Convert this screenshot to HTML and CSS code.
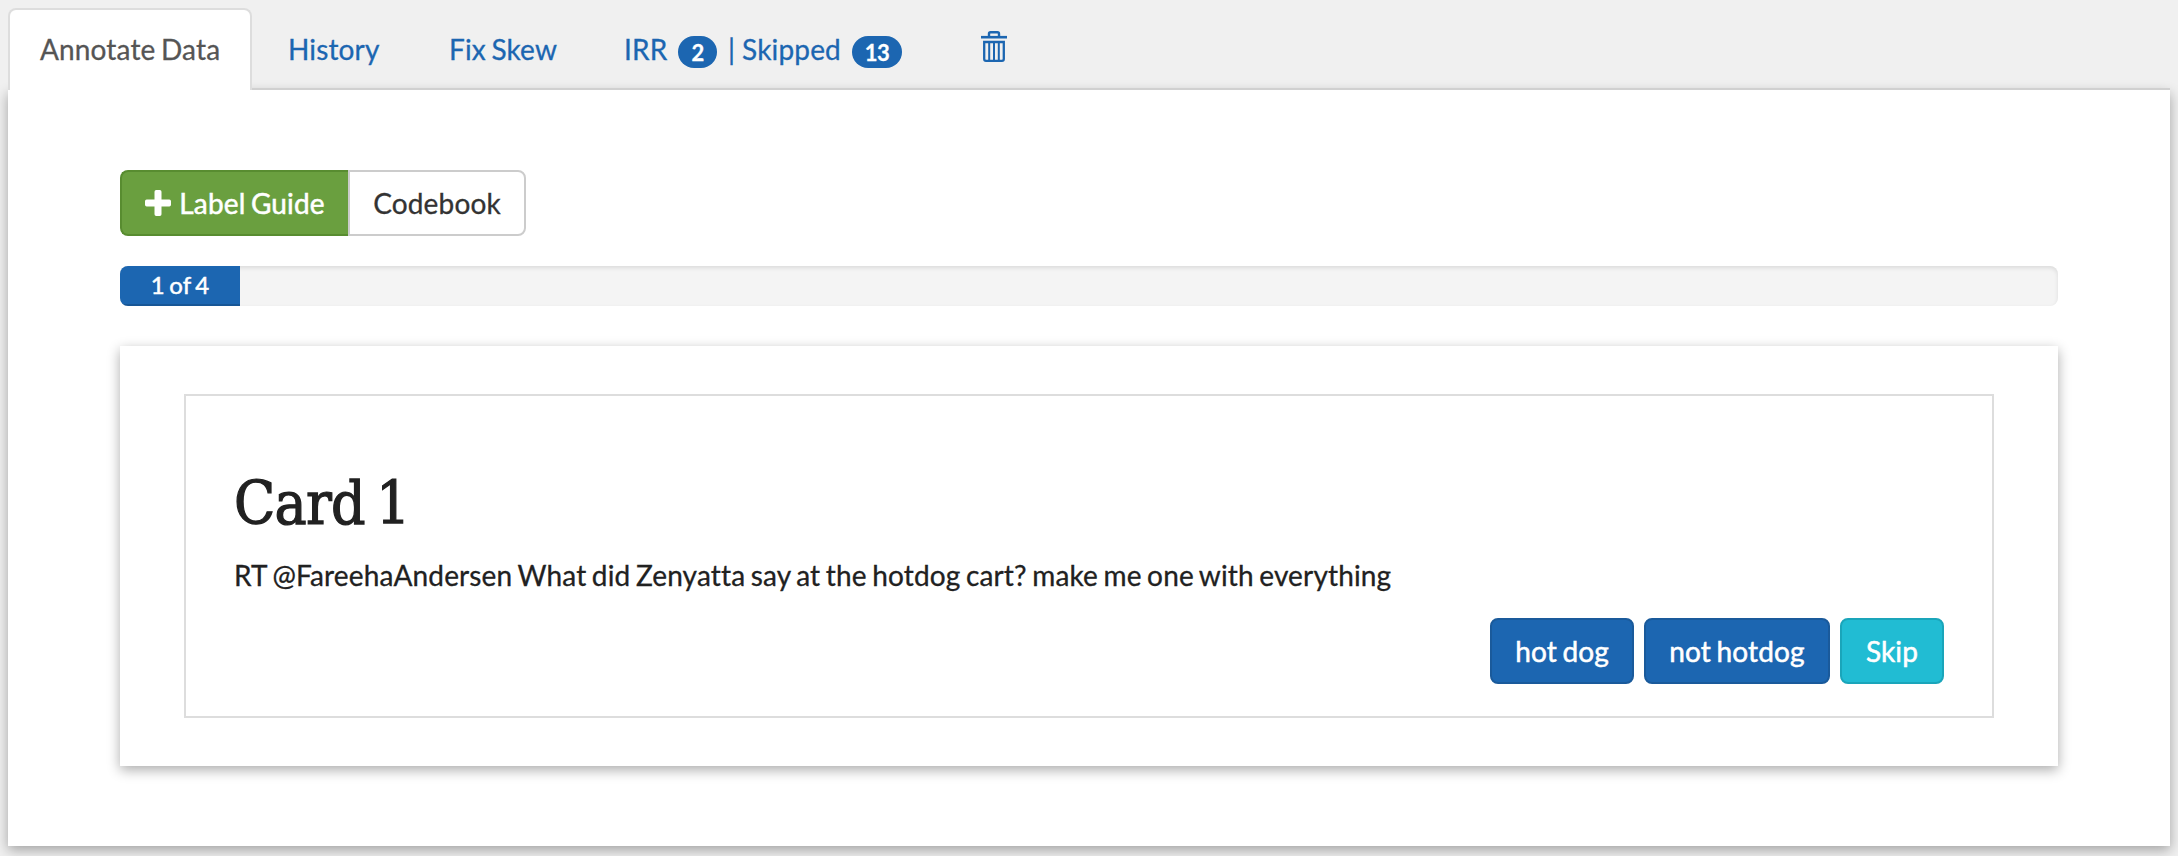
FILE: index.html
```html
<!DOCTYPE html>
<html lang="en">
<head>
<meta charset="utf-8">
<title>Annotate Data</title>
<link rel="stylesheet" href="styles.css">
</head>
<body>
<nav class="tabs">
  <a class="tab tab-active">Annotate Data</a>
  <a class="tab tab-history">History</a>
  <a class="tab tab-skew">Fix Skew</a>
  <a class="tab tab-counts"><span>IRR</span><span class="badge badge-irr">2</span><span class="divider">|</span><span>Skipped</span><span class="badge badge-skipped">13</span></a>
  <a class="tab tab-trash" aria-label="Recycle bin">
    <svg class="trash" viewBox="0 0 26 31" fill="none" stroke="currentColor">
      <path d="M0 6.200H26" stroke-width="2.600"/>
      <path d="M8 6V2.800Q8 1.300 9.500 1.300H16.500Q18 1.300 18 2.800V6" stroke-width="2.400"/>
      <path d="M3.200 11H22.800V28Q22.800 29.800 21 29.800H5Q3.200 29.800 3.200 28Z" stroke-width="2.300"/>
      <path d="M8.200 11V29.500M13 11V29.500M17.800 11V29.500" stroke-width="2"/>
    </svg>
  </a>
</nav>
<main class="panel">
  <div class="button-group">
    <button class="btn btn-guide"><svg class="plus" viewBox="0 0 26 26"><path d="M11.200 0H14.800Q16.500 0 16.500 1.700V9.500H24.300Q26 9.500 26 11.200V14.800Q26 16.500 24.300 16.500H16.500V24.300Q16.500 26 14.800 26H11.200Q9.500 26 9.500 24.300V16.500H1.700Q0 16.500 0 14.800V11.200Q0 9.500 1.700 9.500H9.500V1.700Q9.500 0 11.200 0Z" fill="currentColor"/></svg><span>Label Guide</span></button>
    <button class="btn btn-codebook">Codebook</button>
  </div>
  <div class="progress"><div class="progress-bar">1 of 4</div></div>
  <section class="card">
    <div class="card-body">
      <h2 class="card-title">Card 1</h2>
      <p class="card-text">RT @FareehaAndersen What did Zenyatta say at the hotdog cart? make me one with everything</p>
      <div class="actions">
        <button class="btn btn-label btn-hotdog">hot dog</button>
        <button class="btn btn-label btn-not">not hotdog</button>
        <button class="btn btn-label btn-skip">Skip</button>
      </div>
    </div>
  </section>
</main>
</body>
</html>
```
FILE: styles.css
```css
* { box-sizing: border-box; }
body {
  margin: 0;
  padding: 8px 8px 0;
  height: 856px;
  overflow: hidden;
  background: #f0f0f0;
  color: #212121;
  font: 28px/40px Lato, "Liberation Sans", sans-serif;
  letter-spacing: .15px;
  word-spacing: -1.8px;
  -webkit-text-stroke: .3px currentColor;
}
.tabs { display: flex; gap: 4px; height: 82px; position: relative; z-index: 1; box-shadow: inset 0 -2px #d0d0d0; }
.tab { padding: 19px 30px 21px; border: 2px solid transparent; border-bottom: 0; color: #1c66b1; white-space: nowrap; }
.tab-active { width: 244px; background: #fff; border-color: #ddd; border-radius: 8px 8px 0 0; color: #555; }
.tab-history { width: 157px; }
.tab-skew { width: 171px; }
.tab-counts { display: flex; width: 342px; }
.badge { height: 32px; margin-top: 7px; border-radius: 16px; background: #1c66b1; color: #fff; font-size: 22px; font-weight: 700; line-height: 34px; text-align: center; letter-spacing: -.5px; }
.badge-irr { width: 40px; margin-left: 11px; }
.badge-skipped { width: 52px; margin-left: 11px; }
.divider { margin: 0 7px 0 11px; }
.tab-trash { padding: 21px 0 0 41px; }
.trash { display: block; width: 26px; height: 31px; }
.panel { height: 756px; padding: 80px 112px; background: #fff; box-shadow: 0 4px 12px rgba(0, 0, 0, .33); }
.button-group { display: flex; height: 66px; }
.btn { display: flex; align-items: center; justify-content: center; height: 66px; padding: 0; border: 2px solid; border-radius: 8px; color: #fff; font: 28px/40px Lato, "Liberation Sans", sans-serif; letter-spacing: .15px; word-spacing: -1.8px; white-space: nowrap; -webkit-text-stroke: .5px currentColor; }
.btn-guide { width: 228px; gap: 8px; background: #6a9f3f; border-color: #588c30; border-right: 0; border-radius: 8px 0 0 8px; }
.plus { width: 26px; height: 26px; }
.btn-codebook { width: 178px; background: #fff; border-color: #ccc; border-radius: 0 8px 8px 0; color: #333; -webkit-text-stroke-width: .3px; }
.progress { height: 40px; margin-top: 30px; border-radius: 8px; overflow: hidden; background: #f4f4f4; box-shadow: inset 0 2px 4px rgba(0, 0, 0, .1); }
.progress-bar { width: 120px; height: 40px; background: #1c66b1; box-shadow: inset 0 -2px rgba(0, 0, 0, .15); color: #fff; font-size: 24px; line-height: 38px; text-align: center; -webkit-text-stroke-width: .5px; }
.card { height: 420px; margin-top: 40px; padding: 48px 64px; background: #fff; box-shadow: 0 4px 12px rgba(0, 0, 0, .33); }
.card-body { height: 324px; padding: 74px 48px 0; border: 2px solid #ddd; }
.card-title { margin: 0; font: 400 60px/66px "Roboto Slab", "DejaVu Serif Condensed", "DejaVu Serif", serif; letter-spacing: -.8px; word-spacing: -5px; white-space: nowrap; -webkit-text-stroke-width: 1.2px; }
.card-text { margin: 19px 0 0; white-space: nowrap; }
.actions { display: flex; justify-content: flex-end; gap: 10px; margin-top: 23px; }
.btn-label { background: #1c66b1; border-color: #1a5a9b; }
.btn-hotdog { width: 144px; }
.btn-not { width: 186px; }
.btn-skip { width: 104px; background: #21bcd3; border-color: #1aa5ba; }
```
